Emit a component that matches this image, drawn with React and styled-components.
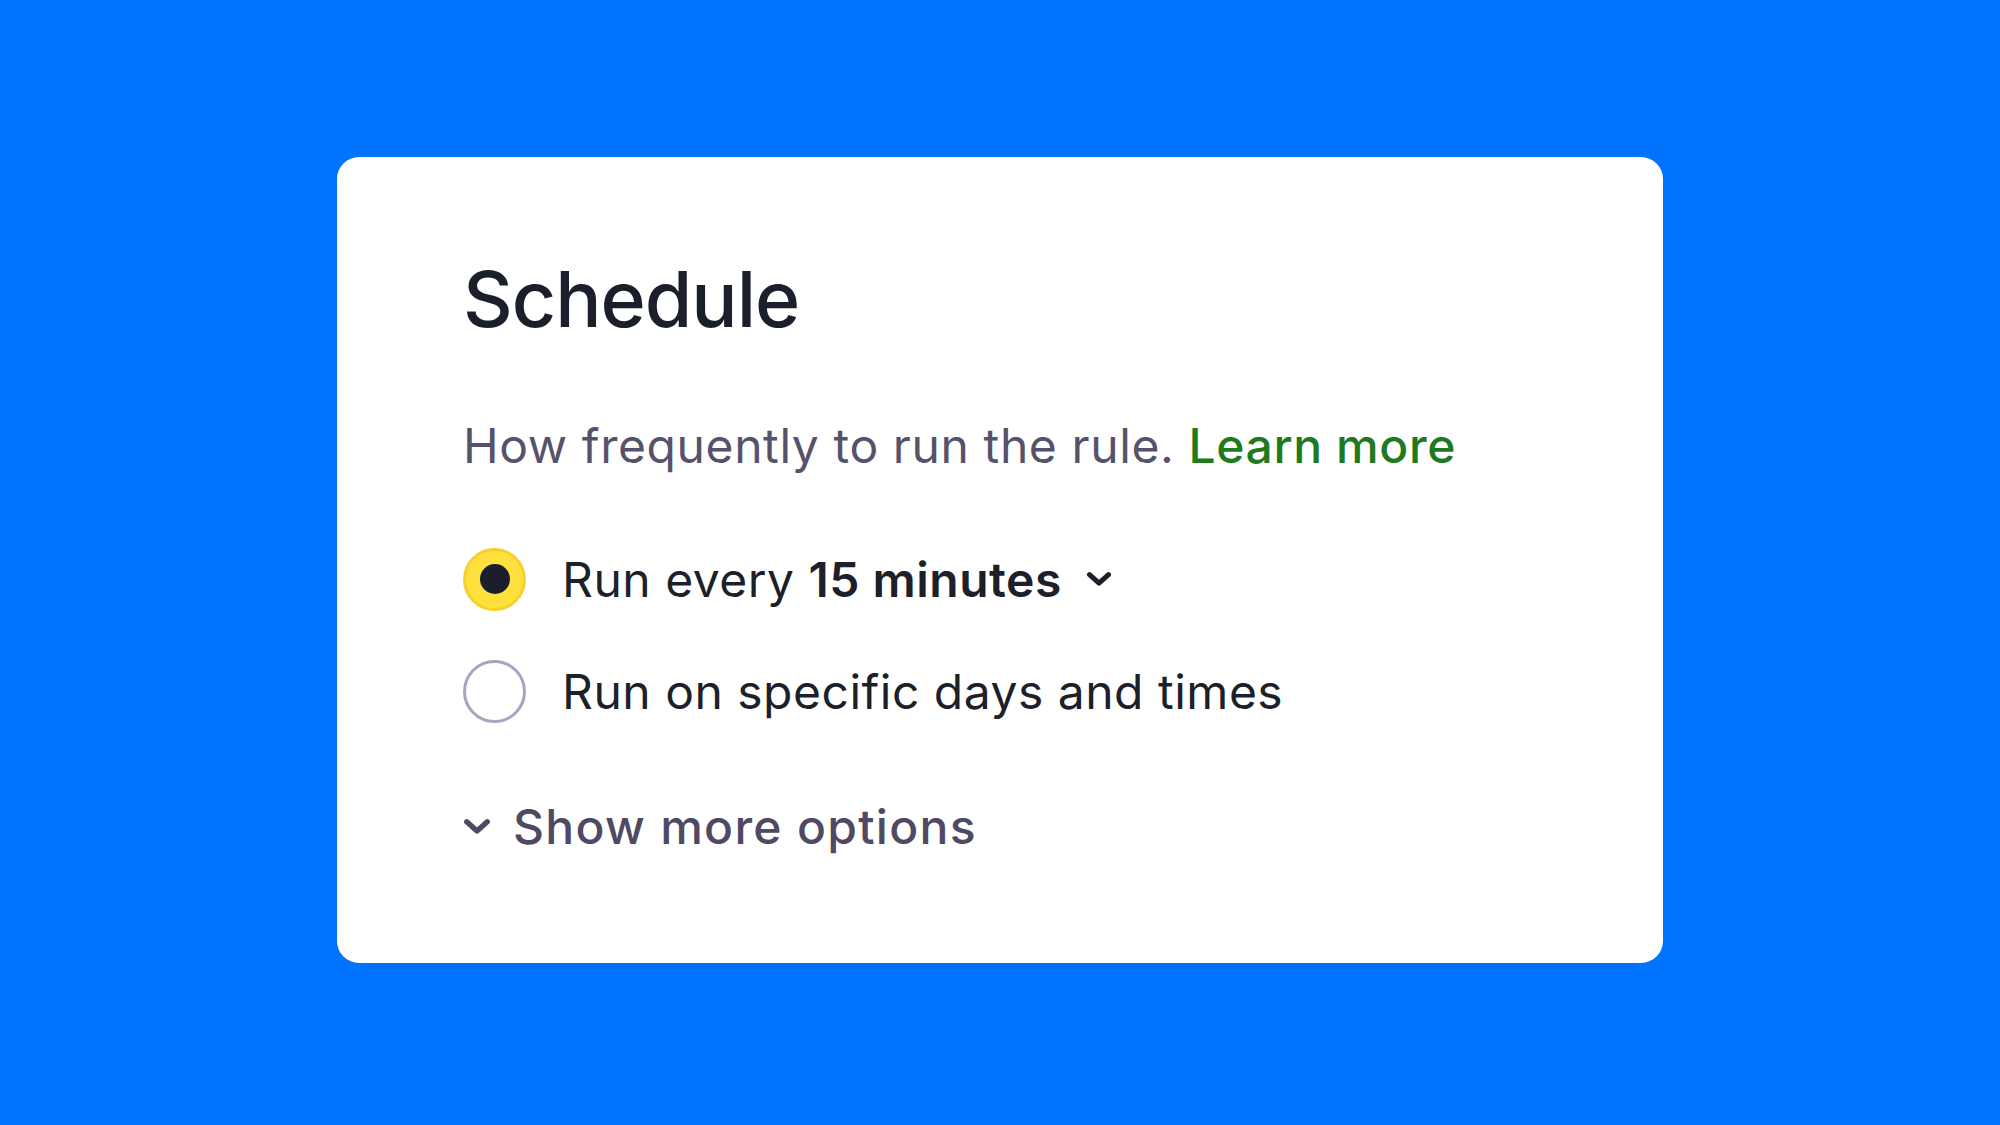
import React from 'react';
import styled, { createGlobalStyle } from 'styled-components';

const GlobalStyle = createGlobalStyle`
  html, body {
    margin: 0;
    padding: 0;
    background: #0074ff;
  }
  body {
    font-family: Inter, "Noto Sans", "Liberation Sans", sans-serif;
  }
`;

const Page = styled.div`
  min-height: 100vh;
  display: grid;
  place-items: center;
  padding-bottom: 6px;
  box-sizing: border-box;
  background: #0074ff;
`;

const Card = styled.div`
  width: 1326px;
  box-sizing: border-box;
  background: #ffffff;
  border-radius: 22px;
  padding: 96px 126px 108px;
  display: flex;
  flex-direction: column;
  align-items: flex-start;
`;

const Title = styled.h1`
  margin: 0;
  font-size: 77px;
  line-height: 92px;
  font-weight: 500;
  color: #1b1f2b;
  letter-spacing: -1px;
`;

const Description = styled.p`
  margin: 73px 0 0;
  font-size: 48px;
  line-height: 56px;
  font-weight: 400;
  color: #57526b;
  letter-spacing: 0.6px;
`;

const Link = styled.a`
  color: #1f7a1f;
  font-weight: 500;
  text-decoration: none;
`;

const Options = styled.div`
  margin-top: 74px;
  display: flex;
  flex-direction: column;
  gap: 49px;
`;

const Option = styled.label`
  display: flex;
  align-items: center;
  gap: 36px;
  height: 63px;
  font-size: 48px;
  line-height: 63px;
  color: #1d1f2a;
  letter-spacing: 0.5px;
  cursor: pointer;
`;

const Radio = styled.span`
  width: 63px;
  height: 63px;
  box-sizing: border-box;
  border-radius: 50%;
  flex-shrink: 0;
  display: grid;
  place-items: center;
  border: 3px solid ${p => (p.checked ? '#f6d12e' : '#a9a3c2')};
  background: ${p => (p.checked ? '#ffe03d' : '#ffffff')};
  &::after {
    content: '';
    width: 30px;
    height: 30px;
    border-radius: 50%;
    background: #1b1f2b;
    display: ${p => (p.checked ? 'block' : 'none')};
  }
`;

const Value = styled.span`
  display: inline-flex;
  align-items: center;
  gap: 24px;
  font-weight: 600;
  margin-left: 14px;
`;

const Chevron = ({ width = 26, color = '#1b1f2b' }) => (
  <svg width={width} height={width * 0.62} viewBox="0 0 26 16" fill="none">
    <path d="M3.5 3.5 L13 12 L22.5 3.5" stroke={color} strokeWidth="5" strokeLinecap="round" strokeLinejoin="round" />
  </svg>
);

const MoreButton = styled.button`
  margin-top: 76px;
  padding: 0;
  border: none;
  background: none;
  display: flex;
  align-items: center;
  gap: 22px;
  font-family: inherit;
  font-size: 48px;
  line-height: 56px;
  font-weight: 500;
  color: #4f4963;
  letter-spacing: 1.3px;
  cursor: pointer;
`;

const App = () => (
  <Page>
    <GlobalStyle />
    <Card>
      <Title>Schedule</Title>
      <Description>
        How frequently to run the rule. <Link href="#">Learn more</Link>
      </Description>
      <Options>
        <Option>
          <Radio checked />
          <span>
            Run every
            <Value>
              15 minutes
              <Chevron />
            </Value>
          </span>
        </Option>
        <Option>
          <Radio />
          <span>Run on specific days and times</span>
        </Option>
      </Options>
      <MoreButton>
        <Chevron width={28} color="#4f4963" />
        Show more options
      </MoreButton>
    </Card>
  </Page>
);

export default App;
